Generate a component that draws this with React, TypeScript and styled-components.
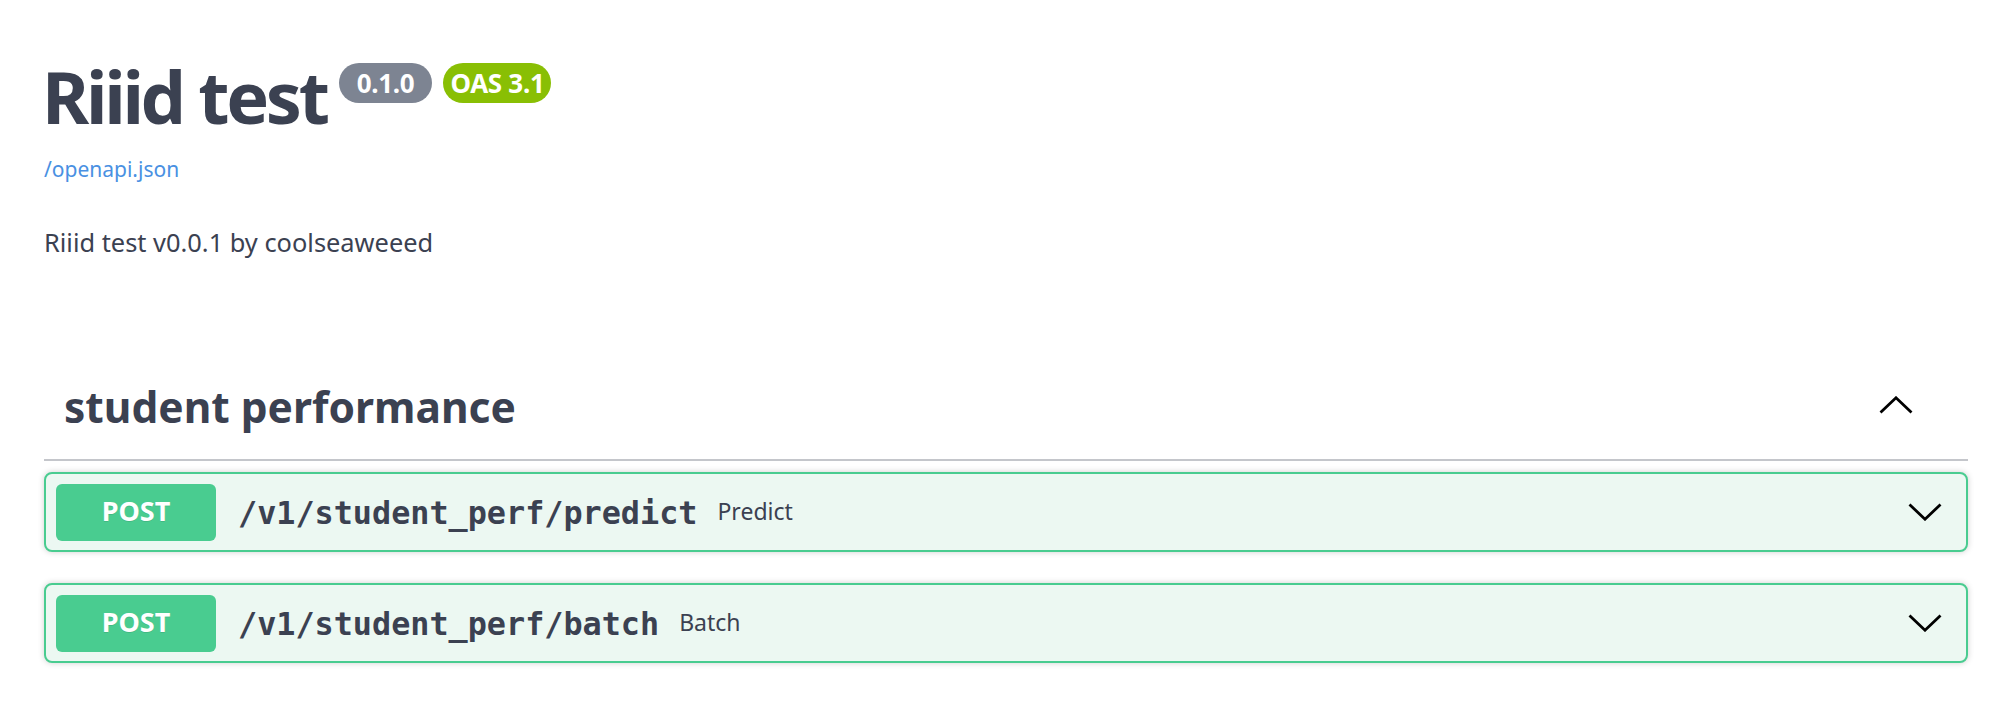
import React from "react";
import styled, { createGlobalStyle } from "styled-components";

const GlobalStyle = createGlobalStyle`
  html, body {
    margin: 0;
    padding: 0;
    background: #ffffff;
  }
  body {
    font-family: "Noto Sans", "Open Sans", sans-serif;
    color: #3b4151;
  }
  * { box-sizing: border-box; }
`;

const Page = styled.div`
  padding: 60px 28px 40px 44px;
`;

const Info = styled.header`
  display: flex;
  flex-direction: column;
  align-items: flex-start;
`;

const TitleRow = styled.div`
  display: flex;
  align-items: flex-start;
  gap: 11px;
`;

const Title = styled.h2`
  margin: 0 1px 0 -2px;
  font-family: "Noto Sans", sans-serif;
  font-weight: 700;
  font-size: 72px;
  line-height: 72px;
  letter-spacing: -3.3px;
  color: #3b4151;
`;

const Badge = styled.span<{ $bg: string; $pad: number }>`
  margin-top: 3px;
  height: 40px;
  padding: 0 ${(p) => p.$pad}px;
  border-radius: 20px;
  background: ${(p) => p.$bg};
  color: #ffffff;
  display: flex;
  align-items: center;
  font-family: "Noto Sans", sans-serif;
  font-weight: 700;
  font-size: 26px;
  line-height: 1;
  letter-spacing: -0.3px;
`;

const SpecLink = styled.a`
  display: block;
  margin-top: 27px;
  font-size: 21px;
  line-height: 21px;
  color: #4990e2;
  text-decoration: none;
`;

const Description = styled.p`
  margin: 50px 0 0;
  font-size: 25.4px;
  line-height: 25px;
  color: #3b4151;
`;

const TagSection = styled.section`
  margin-top: 96px;
`;

const TagHeader = styled.div`
  height: 110px;
  display: flex;
  align-items: center;
  justify-content: space-between;
  padding: 0 55px 0 20px;
  border-bottom: 2px solid #c4c6cb;
`;

const TagName = styled.h3`
  margin: 0;
  padding-top: 4px;
  font-family: "Noto Sans", sans-serif;
  font-weight: 700;
  font-size: 42.5px;
  line-height: 42px;
  color: #3b4151;
`;

const OpList = styled.div`
  padding-top: 11px;
  display: flex;
  flex-direction: column;
  gap: 31px;
`;

const Opblock = styled.div`
  border: 2px solid #49cc90;
  border-radius: 8px;
  background: #ecf8f2;
  box-shadow: 0 0 6px rgba(0, 0, 0, 0.19);
`;

const Summary = styled.div`
  height: 76px;
  display: flex;
  align-items: center;
  padding: 0 24px 0 10px;
`;

const Method = styled.span`
  flex: none;
  width: 160px;
  height: 57px;
  border-radius: 6px;
  background: #49cc90;
  color: #ffffff;
  display: flex;
  align-items: center;
  justify-content: center;
  padding-bottom: 4px;
  font-family: "Noto Sans", sans-serif;
  font-weight: 700;
  font-size: 27px;
  text-shadow: 0 1px 0 rgba(0, 0, 0, 0.1);
  margin-right: 22px;
`;

const Path = styled.span`
  font-family: "DejaVu Sans Mono", "Liberation Mono", monospace;
  font-weight: 700;
  font-size: 31.8px;
  color: #3b4151;
  margin-right: 20px;
`;

const OpSummary = styled.span`
  flex: 1;
  font-family: "Noto Sans", sans-serif;
  font-size: 23px;
  color: #3b4151;
  margin-bottom: 3px;
`;

const ChevronSvg = styled.svg`
  flex: none;
  display: block;
`;

function Chevron({ up }: { up?: boolean }) {
  return (
    <ChevronSvg width="34" height="18" viewBox="0 0 34 18" aria-hidden="true">
      <polyline
        points={up ? "1.5,16.5 17,1.8 32.5,16.5" : "1.5,1.5 17,16.2 32.5,1.5"}
        fill="none"
        stroke="#000000"
        strokeWidth="2.8"
        strokeLinejoin="miter"
      />
    </ChevronSvg>
  );
}

const ops = [
  { method: "POST", path: "/v1/student_perf/predict", summary: "Predict" },
  { method: "POST", path: "/v1/student_perf/batch", summary: "Batch" },
];

export default function App() {
  return (
    <>
      <GlobalStyle />
      <Page>
        <Info>
          <TitleRow>
            <Title>Riiid test</Title>
            <Badge $bg="#7d8492" $pad={18}>0.1.0</Badge>
            <Badge $bg="#89bf04" $pad={7}>OAS 3.1</Badge>
          </TitleRow>
          <SpecLink href="#">/openapi.json</SpecLink>
          <Description>Riiid test v0.0.1 by coolseaweeed</Description>
        </Info>
        <TagSection>
          <TagHeader>
            <TagName>student performance</TagName>
            <Chevron up />
          </TagHeader>
          <OpList>
            {ops.map((op) => (
              <Opblock key={op.path}>
                <Summary>
                  <Method>{op.method}</Method>
                  <Path>{op.path}</Path>
                  <OpSummary>{op.summary}</OpSummary>
                  <Chevron />
                </Summary>
              </Opblock>
            ))}
          </OpList>
        </TagSection>
      </Page>
    </>
  );
}
